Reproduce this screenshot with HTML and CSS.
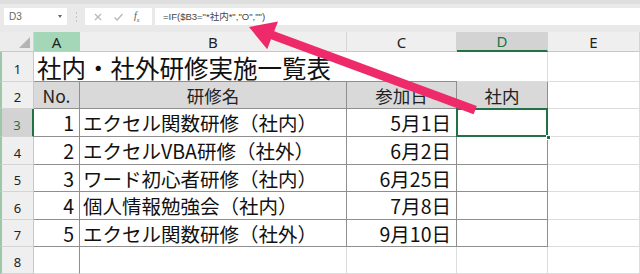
FILE: index.html
```html
<!DOCTYPE html>
<html lang="ja">
<head>
<meta charset="utf-8">
<link rel="stylesheet" href="styles.css">
</head>
<body>
<div class="page">
  <div class="toolbar">
    <div class="namebox"><span class="cellref">D3</span><span class="dd"></span></div>
    <div class="sep"><i></i><i></i><i></i></div>
    <div class="fxbox">
      <svg class="ic" width="10" height="10" viewBox="0 0 10 10"><path d="M2 2L8 8M8 2L2 8" stroke="#b8b8b8" stroke-width="1.3" fill="none"/></svg>
      <svg class="ic" width="11" height="10" viewBox="0 0 11 10"><path d="M1.5 5.5L4.2 8L9.5 2" stroke="#b8b8b8" stroke-width="1.3" fill="none"/></svg>
      <span class="fx">f<sub>x</sub></span>
    </div>
    <div class="formula">=IF($B3="*社内*","O","")</div>
  </div>
  <div class="sheet">
    <div class="corner"><span class="tri"></span></div>
    <div class="ch ch-a">A</div>
    <div class="ch">B</div>
    <div class="ch">C</div>
    <div class="ch ch-sel">D</div>
    <div class="ch ch-e">E</div>

    <div class="rh">1</div>
    <div class="title">社内・社外研修実施一覧表</div>
    <div class="c c-light"></div>
    <div class="c c-light"></div>

    <div class="rh">2</div>
    <div class="c hd">No.</div>
    <div class="c hd">研修名</div>
    <div class="c hd">参加日</div>
    <div class="c hd">社内</div>
    <div class="c c-light c-top"></div>

    <div class="rh rh-sel">3</div>
    <div class="c num">1</div>
    <div class="c txt">エクセル関数研修（社内）</div>
    <div class="c num">5月1日</div>
    <div class="c active"><span class="handle"></span></div>
    <div class="c c-light"></div>

    <div class="rh">4</div>
    <div class="c num">2</div>
    <div class="c txt">エクセルVBA研修（社外）</div>
    <div class="c num">6月2日</div>
    <div class="c"></div>
    <div class="c c-light"></div>

    <div class="rh">5</div>
    <div class="c num">3</div>
    <div class="c txt">ワード初心者研修（社内）</div>
    <div class="c num">6月25日</div>
    <div class="c"></div>
    <div class="c c-light"></div>

    <div class="rh">6</div>
    <div class="c num">4</div>
    <div class="c txt">個人情報勉強会（社内）</div>
    <div class="c num">7月8日</div>
    <div class="c"></div>
    <div class="c c-light"></div>

    <div class="rh">7</div>
    <div class="c num">5</div>
    <div class="c txt">エクセル関数研修（社外）</div>
    <div class="c num">9月10日</div>
    <div class="c"></div>
    <div class="c c-light"></div>

    <div class="rh">8</div>
    <div class="c c-light c-a8"></div>
    <div class="c c-light"></div>
    <div class="c c-light"></div>
    <div class="c c-light"></div>
    <div class="c c-light"></div>
  </div>
  <svg class="arrow" width="640" height="274" viewBox="0 0 640 274">
    <polygon points="249,27 278,21.5 274.2,31.3 476.8,106 473.6,114.2 271,39.3 267.2,49.3" fill="#ee2a6a"/>
  </svg>
</div>
</body>
</html>
```
FILE: styles.css
```css
* { box-sizing: border-box; }
html, body { margin: 0; padding: 0; }
body {
  width: 640px;
  height: 274px;
  overflow: hidden;
  background: #ffffff;
  font-family: "Noto Sans CJK JP", "Noto Sans", sans-serif;
}
.page { position: relative; width: 640px; height: 274px; }

.toolbar {
  height: 32px;
  background: #e9e9e9;
  border-top: 4px solid #dedede;
  padding-top: 4px;
  display: flex;
  align-items: flex-start;
}
.namebox {
  margin-left: 4px;
  width: 63px;
  height: 17px;
  background: #ffffff;
  display: flex;
  align-items: center;
  justify-content: space-between;
  padding: 0 5px 0 5px;
}
.cellref {
  font-family: "Liberation Sans", sans-serif;
  font-size: 10px;
  color: #666;
}
.dd {
  width: 0; height: 0;
  border-left: 2.5px solid transparent;
  border-right: 2.5px solid transparent;
  border-top: 3px solid #666;
}
.sep {
  width: 18px;
  height: 17px;
  display: flex;
  flex-direction: column;
  align-items: center;
  justify-content: center;
  gap: 2px;
}
.sep i { display: block; width: 1px; height: 2px; background: #c4c4c4; }
.fxbox {
  width: 67px;
  height: 17px;
  background: #ffffff;
  display: flex;
  align-items: center;
  padding-left: 8px;
  gap: 10px;
}
.fx {
  font-family: "Liberation Serif", serif;
  font-style: italic;
  font-size: 10px;
  color: #555;
  line-height: 1;
}
.fx sub { font-size: 6px; }
.formula {
  margin-left: 3px;
  flex: 1;
  height: 17px;
  background: #ffffff;
  padding-left: 8px;
  font-family: "Liberation Sans", "Noto Sans CJK JP", sans-serif;
  font-size: 9.5px;
  line-height: 17px;
  color: #444;
}

.sheet {
  display: grid;
  grid-template-columns: 34px 46px 267px 110px 91px 92px;
  grid-template-rows: 20px 30px 27px 28px 28px 27px 28px 27px 27px;
}
.corner {
  background: #ececec;
  border-right: 1px solid #d4d4d4;
  border-bottom: 1px solid #c8c8c8;
  position: relative;
}
.tri {
  position: absolute;
  right: 3px;
  bottom: 3px;
  width: 0; height: 0;
  border-left: 11px solid transparent;
  border-bottom: 11px solid #b4b4b4;
}
.ch {
  background: #efefef;
  border-right: 1px solid #d4d4d4;
  border-bottom: 1px solid #c8c8c8;
  font-family: "Noto Sans", sans-serif;
  font-size: 15px;
  color: #222;
  display: flex;
  align-items: center;
  justify-content: center;
  line-height: 1;
  padding-top: 1px;
}
.ch-a { background: #a4d6b8; border-right-color: #a4d6b8; }
.ch-sel {
  background: #d3d3d3;
  color: #217346;
  border-bottom: 2px solid #217346;
}
.rh {
  background: #efefef;
  border-right: 1px solid #c8c8c8;
  border-bottom: 1px solid #d4d4d4;
  border-left: 2px solid #9cc7a9;
  font-family: "Noto Sans", sans-serif;
  font-size: 13px;
  color: #222;
  display: flex;
  align-items: center;
  justify-content: center;
  padding-top: 4px;
}
.rh-sel {
  background: #d3d3d3;
  color: #217346;
  border-right: 2px solid #217346;
}
.title {
  grid-column: 2 / 5;
  font-size: 24.5px;
  line-height: 30px;
  padding-left: 3px;
  padding-top: 1px;
  color: #111;
  border-bottom: 1px solid #8f8f8f;
  white-space: nowrap;
}
.c {
  border-right: 1px solid #8f8f8f;
  border-bottom: 1px solid #8f8f8f;
  font-size: 19.5px;
  line-height: 26px;
  color: #111;
  white-space: nowrap;
  overflow: hidden;
}
.c-light {
  border-right: 1px solid #dcdcdc;
  border-bottom: 1px solid #dcdcdc;
}
.c-top { border-top: 0; }
.c-a8 { border-right-color: #8f8f8f; }
.hd {
  background: #d9d9d9;
  text-align: center;
  font-size: 17.5px;
  line-height: 27px;
  color: #222;
}
.num { text-align: right; padding-right: 5px; padding-top: 1px; }
.txt { padding-left: 3px; padding-top: 1px; }
.active {
  position: relative;
  overflow: visible;
  box-shadow: inset 0 0 0 2px #217346;
  border-right: 0;
  border-bottom: 0;
  margin: -1px 0 0 -1px;
}
.handle {
  position: absolute;
  right: -3px;
  bottom: -3px;
  width: 5px;
  height: 5px;
  background: #217346;
  border: 1px solid #ffffff;
}
.arrow {
  position: absolute;
  left: 0;
  top: 0;
  pointer-events: none;
}
```
